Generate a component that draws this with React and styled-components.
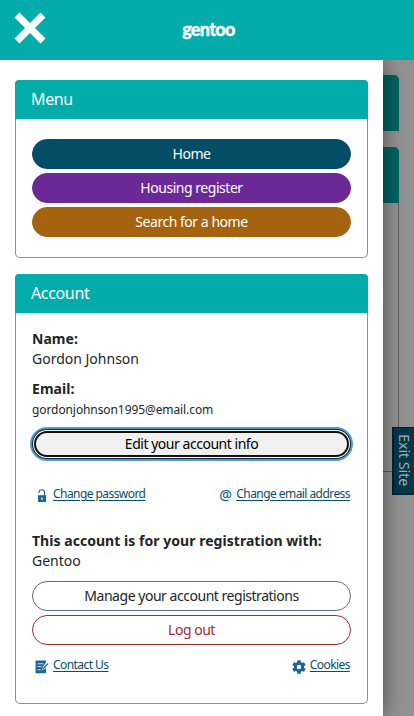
import React from "react";
import styled, { createGlobalStyle } from "styled-components";

const GlobalStyle = createGlobalStyle`
  *, *::before, *::after { box-sizing: border-box; }
  body { margin: 0; overflow: hidden; font-family: "Noto Sans", "Open Sans", sans-serif; color: #212529; }
`;

const Page = styled.div`
  height: 716px;
  display: flex;
  flex-direction: column;
  overflow: hidden;
`;

const TopBar = styled.header`
  height: 60px;
  flex: none;
  display: grid;
  grid-template-columns: 60px 1fr 60px;
  align-items: center;
  background: #02acab;
`;

const CloseButton = styled.button`
  justify-self: center;
  width: 32px;
  height: 32px;
  margin-top: -4px;
  padding: 0;
  border: 0;
  background: none;
  svg { display: block; }
`;

const Logo = styled.span`
  justify-self: center;
  margin: -2px 0 0 3px;
  font: 900 18px/20px Lato, sans-serif;
  letter-spacing: -0.65px;
  color: #fff;
  -webkit-text-stroke: 0.3px #fff;
`;

const Stage = styled.div`
  position: relative;
  flex: 1;
  padding: 15px 15px 0;
  background: #929292;
  overflow: hidden;
`;

const DimmedHeading = styled.div`
  height: 56px;
  margin: 0 -1px;
  border-radius: 5px 5px 0 0;
  background: #006462;
`;

const DimmedCard = styled.section`
  height: ${(p) => p.$height}px;
  margin-bottom: 16px;
  border: 1px solid #5c5c60;
  border-width: 0 1px ${(p) => (p.$open ? 1 : 0)}px;
  border-radius: ${(p) => (p.$open ? "5px" : "5px 5px 0 0")};
`;

const ExitTab = styled.button`
  position: absolute;
  right: 0;
  top: 367px;
  width: 22px;
  height: 68px;
  padding: 0 0 0 2px;
  border: solid #06222e;
  border-width: 1px 0 2px 2px;
  background: #02384a;
  color: #a3adb2;
  writing-mode: vertical-rl;
  font: 14.5px/18px "Noto Sans", sans-serif;
  letter-spacing: -0.15px;
`;

const Drawer = styled.aside`
  position: absolute;
  inset: 0 auto 0 0;
  width: 383px;
  padding: 20px 15px 0;
  background: #fff;
  box-shadow: 0 0 20px rgba(0, 0, 0, 0.5);
`;

const Card = styled.section`
  height: ${(p) => p.$height}px;
  margin-bottom: 16px;
  display: flex;
  flex-direction: column;
  border: 1px solid #8b8f94;
  border-top: 0;
  border-radius: 5px;
`;

const CardTitle = styled.h2`
  flex: none;
  height: 39px;
  margin: 0 -1px;
  padding: 0 16px;
  border-radius: 4px 4px 0 0;
  background: #02acab;
  color: #fff;
  font-weight: 400;
  font-size: 16px;
  line-height: 39px;
  letter-spacing: -0.35px;
`;

const MenuList = styled.nav`
  display: flex;
  flex-direction: column;
  gap: 4px;
  padding: 20px 16px;
`;

const PillButton = styled.button`
  display: block;
  width: 100%;
  height: 30px;
  padding: 0;
  border: 1px solid ${(p) => p.$border || p.$fill};
  border-radius: 15px;
  background: ${(p) => p.$fill || "#fff"};
  color: ${(p) => p.$color || "#fff"};
  font: 14px/26px "Noto Sans", sans-serif;
  letter-spacing: -0.47px;
`;

const FocusedPill = styled(PillButton)`
  border: 2px solid #101010;
  width: 315px;
  height: 26px;
  margin: 0 2px;
  line-height: 20px;
  box-shadow: 0 0 0 1px #fff, 0 0 0 2px #101c38, 0 0 0 4px #4f9bc4;
`;

const AccountBody = styled.div`
  display: flex;
  flex-direction: column;
  padding: 16px 16px 0;
`;

const Field = styled.div`
  margin: ${(p) => p.$top || 0}px 0 10px;
  font-size: 14px;
  line-height: 20px;
`;

const Label = styled.div`
  font-weight: 700;
  letter-spacing: 0.04px;
`;

const Value = styled.div`
  font-size: ${(p) => (p.$small ? "12px" : "14px")};
  line-height: ${(p) => (p.$small ? "22px" : "20px")};
  letter-spacing: ${(p) => (p.$small ? "-0.09px" : "0")};
`;

const Stack = styled.div`
  display: flex;
  flex-direction: column;
  gap: 4px;
`;

const LinkRow = styled.div`
  display: flex;
  justify-content: space-between;
  margin-top: ${(p) => p.$top}px;
  height: 20px;
  padding: 0 1px 0 3px;
`;

const IconLink = styled.a`
  display: flex;
  align-items: flex-start;
  gap: 4px;
  color: #0b4d66;
  font-size: 12px;
  line-height: 20px;
  letter-spacing: -0.56px;
  text-decoration: none;
  span { text-decoration: underline; text-underline-offset: 2px; }
  svg { margin-top: 5px; width: 14px; height: 14px; flex: none; }
`;

const AtSign = styled.b`
  margin-right: 1px;
  color: #1a6091;
  font-weight: 500;
  font-size: 14px;
  line-height: 22px;
`;

const CloseIcon = () => (
  <svg width="32" height="32" viewBox="0 0 32 32">
    <path d="M3 3L29 29M29 3L3 29" stroke="#fff" strokeWidth="7" />
  </svg>
);

const LockIcon = () => (
  <svg viewBox="0 0 14 14">
    <path d="M4 4V3.6a2.7 2.7 0 0 1 5.6 0V7" fill="none" stroke="#1a6496" strokeWidth="1.1" />
    <path d="M3 6.2h8V13H3z" fill="#1a6496" />
    <path d="M6.4 8.4h1.2v2.6H6.4z" fill="#fff" />
  </svg>
);

const NoteIcon = () => (
  <svg viewBox="0 0 14 14">
    <path d="M.6.6H11v2L8.2 6.3 7.5 10l3-1.5.5-.8v5.6H.6z" fill="#1a6496" />
    <path d="M2.6 3.8h6M2.6 6.6h4M2.6 9.9h3" stroke="#fff" strokeWidth=".8" />
    <path d="M7.2 10.2l.6-2.3 4.5-5 1.3 1.1-4.4 5.1z" fill="#1a6496" stroke="#fff" strokeWidth=".4" />
  </svg>
);

const GearIcon = () => (
  <svg viewBox="2 2 20 20">
    <path
      fill="#1a6496"
      d="M19.14 12.94c.04-.3.06-.61.06-.94s-.02-.64-.07-.94l2.03-1.58a.49.49 0 0 0 .12-.61l-1.92-3.32a.49.49 0 0 0-.59-.22l-2.39.96a7 7 0 0 0-1.62-.94l-.36-2.54A.48.48 0 0 0 13.92 2.4h-3.84a.48.48 0 0 0-.48.41l-.36 2.54a7 7 0 0 0-1.62.94l-2.39-.96a.48.48 0 0 0-.59.22L2.72 8.87a.48.48 0 0 0 .12.61l2.03 1.58a6 6 0 0 0 0 1.88l-2.03 1.58a.49.49 0 0 0-.12.61l1.92 3.32c.12.22.37.29.59.22l2.39-.96c.5.38 1.03.7 1.62.94l.36 2.54c.05.24.24.41.48.41h3.84c.24 0 .44-.17.48-.41l.36-2.54c.59-.24 1.12-.56 1.62-.94l2.39.96c.22.07.47 0 .59-.22l1.92-3.32a.49.49 0 0 0-.12-.61zM12 15.2A3.2 3.2 0 1 1 12 8.8a3.2 3.2 0 0 1 0 6.4z"
    />
  </svg>
);

const menuItems = [
  { label: "Home", fill: "#034d67" },
  { label: "Housing register", fill: "#6c2896" },
  { label: "Search for a home", fill: "#a5620f" },
];

export default function App() {
  return (
    <Page>
      <GlobalStyle />
      <TopBar>
        <CloseButton aria-label="Close menu"><CloseIcon /></CloseButton>
        <Logo>gentoo</Logo>
      </TopBar>
      <Stage>
        <DimmedCard $height={56}><DimmedHeading /></DimmedCard>
        <DimmedCard $height={325} $open><DimmedHeading /></DimmedCard>
        <ExitTab>Exit Site</ExitTab>
        <Drawer>
          <Card $height={178}>
            <CardTitle>Menu</CardTitle>
            <MenuList>
              {menuItems.map((item) => (
                <PillButton key={item.label} $fill={item.fill}>{item.label}</PillButton>
              ))}
            </MenuList>
          </Card>
          <Card $height={430}>
            <CardTitle>Account</CardTitle>
            <AccountBody>
              <Field>
                <Label>Name:</Label>
                <Value>Gordon Johnson</Value>
              </Field>
              <Field>
                <Label>Email:</Label>
                <Value $small>gordonjohnson1995@email.com</Value>
              </Field>
              <FocusedPill $fill="#f0f0f0" $color="#000">Edit your account info</FocusedPill>
              <LinkRow $top={27}>
                <IconLink href="#"><LockIcon /><span>Change password</span></IconLink>
                <IconLink href="#"><AtSign>@</AtSign><span>Change email address</span></IconLink>
              </LinkRow>
              <Field $top={27}>
                <Label>This account is for your registration with:</Label>
                <Value>Gentoo</Value>
              </Field>
              <Stack>
                <PillButton $border="#5b6b80" $color="#212529">Manage your account registrations</PillButton>
                <PillButton $border="#9d2b2b" $color="#a32a2a">Log out</PillButton>
              </Stack>
              <LinkRow $top={10}>
                <IconLink href="#"><NoteIcon /><span>Contact Us</span></IconLink>
                <IconLink href="#"><GearIcon /><span>Cookies</span></IconLink>
              </LinkRow>
            </AccountBody>
          </Card>
        </Drawer>
      </Stage>
    </Page>
  );
}
